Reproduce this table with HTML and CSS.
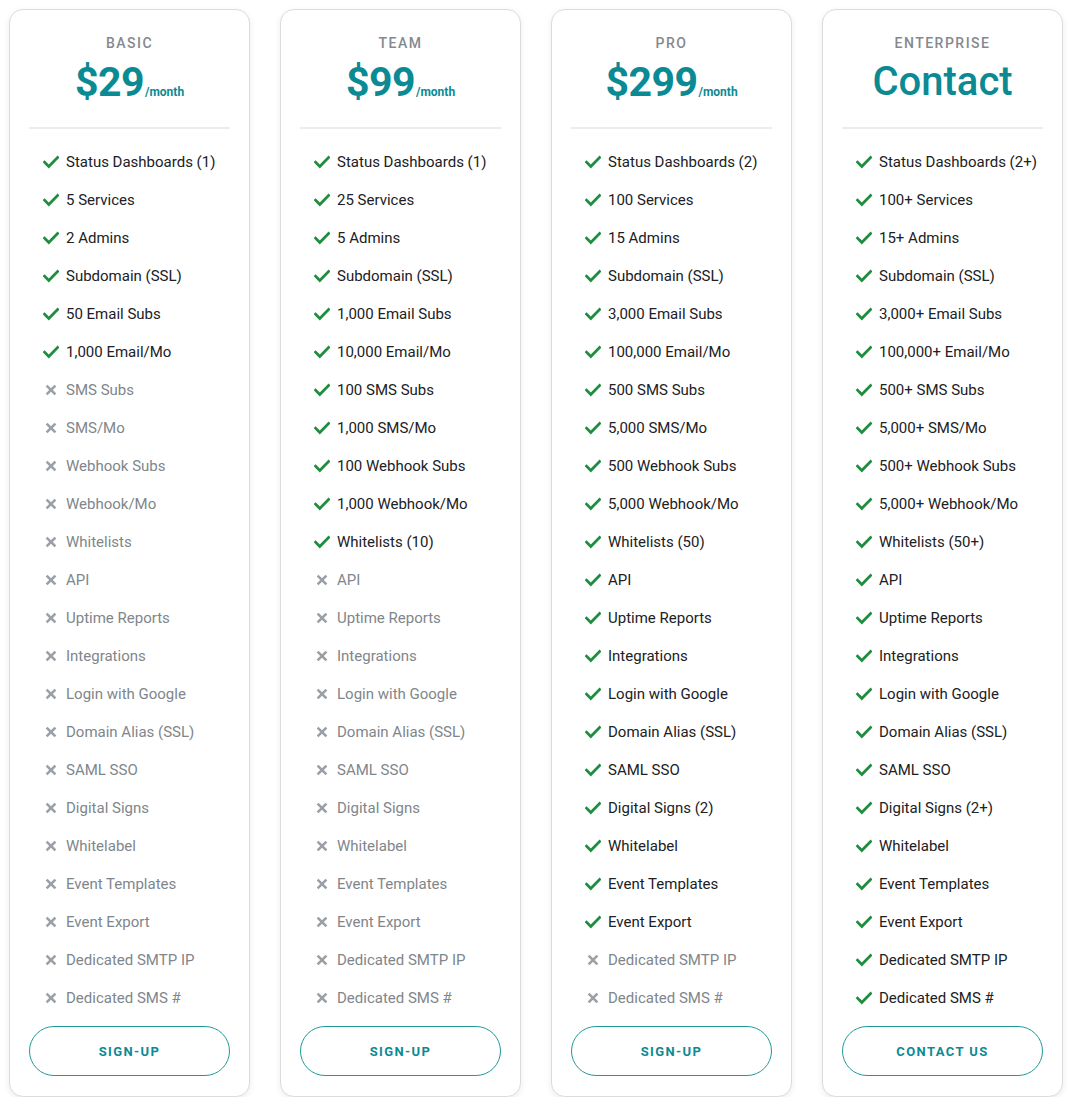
FILE: index.html
```html
<!DOCTYPE html>
<html lang="en">
<head>
<meta charset="utf-8">
<title>Pricing</title>
<link rel="stylesheet" href="styles.css">
</head>
<body>
<svg class="defs" width="0" height="0" aria-hidden="true">
  <symbol id="chk" viewBox="0 0 16 16"><path d="M1.6 8.2l4.2 4.2L14.6 3.5" fill="none" stroke="#1e8e3e" stroke-width="2.8" stroke-linecap="square"/></symbol>
  <symbol id="x" viewBox="0 0 16 16"><path d="M3.6 3.6l8.8 8.8M12.4 3.6l-8.8 8.8" fill="none" stroke="#9aa0a6" stroke-width="2.6"/></symbol>
</svg>
<div class="plans">
  <section class="card">
    <header class="head">
      <div class="tier">BASIC</div>
      <div class="price"><span class="amt">$29</span><span class="per">/month</span></div>
    </header>
    <ul class="feats">
      <li class="on"><svg class="ic"><use href="#chk"/></svg>Status Dashboards (1)</li>
      <li class="on"><svg class="ic"><use href="#chk"/></svg>5 Services</li>
      <li class="on"><svg class="ic"><use href="#chk"/></svg>2 Admins</li>
      <li class="on"><svg class="ic"><use href="#chk"/></svg>Subdomain (SSL)</li>
      <li class="on"><svg class="ic"><use href="#chk"/></svg>50 Email Subs</li>
      <li class="on"><svg class="ic"><use href="#chk"/></svg>1,000 Email/Mo</li>
      <li class="off"><svg class="ic"><use href="#x"/></svg>SMS Subs</li>
      <li class="off"><svg class="ic"><use href="#x"/></svg>SMS/Mo</li>
      <li class="off"><svg class="ic"><use href="#x"/></svg>Webhook Subs</li>
      <li class="off"><svg class="ic"><use href="#x"/></svg>Webhook/Mo</li>
      <li class="off"><svg class="ic"><use href="#x"/></svg>Whitelists</li>
      <li class="off"><svg class="ic"><use href="#x"/></svg>API</li>
      <li class="off"><svg class="ic"><use href="#x"/></svg>Uptime Reports</li>
      <li class="off"><svg class="ic"><use href="#x"/></svg>Integrations</li>
      <li class="off"><svg class="ic"><use href="#x"/></svg>Login with Google</li>
      <li class="off"><svg class="ic"><use href="#x"/></svg>Domain Alias (SSL)</li>
      <li class="off"><svg class="ic"><use href="#x"/></svg>SAML SSO</li>
      <li class="off"><svg class="ic"><use href="#x"/></svg>Digital Signs</li>
      <li class="off"><svg class="ic"><use href="#x"/></svg>Whitelabel</li>
      <li class="off"><svg class="ic"><use href="#x"/></svg>Event Templates</li>
      <li class="off"><svg class="ic"><use href="#x"/></svg>Event Export</li>
      <li class="off"><svg class="ic"><use href="#x"/></svg>Dedicated SMTP IP</li>
      <li class="off"><svg class="ic"><use href="#x"/></svg>Dedicated SMS #</li>
    </ul>
    <a class="btn" href="#">SIGN-UP</a>
  </section>

  <section class="card">
    <header class="head">
      <div class="tier">TEAM</div>
      <div class="price"><span class="amt">$99</span><span class="per">/month</span></div>
    </header>
    <ul class="feats">
      <li class="on"><svg class="ic"><use href="#chk"/></svg>Status Dashboards (1)</li>
      <li class="on"><svg class="ic"><use href="#chk"/></svg>25 Services</li>
      <li class="on"><svg class="ic"><use href="#chk"/></svg>5 Admins</li>
      <li class="on"><svg class="ic"><use href="#chk"/></svg>Subdomain (SSL)</li>
      <li class="on"><svg class="ic"><use href="#chk"/></svg>1,000 Email Subs</li>
      <li class="on"><svg class="ic"><use href="#chk"/></svg>10,000 Email/Mo</li>
      <li class="on"><svg class="ic"><use href="#chk"/></svg>100 SMS Subs</li>
      <li class="on"><svg class="ic"><use href="#chk"/></svg>1,000 SMS/Mo</li>
      <li class="on"><svg class="ic"><use href="#chk"/></svg>100 Webhook Subs</li>
      <li class="on"><svg class="ic"><use href="#chk"/></svg>1,000 Webhook/Mo</li>
      <li class="on"><svg class="ic"><use href="#chk"/></svg>Whitelists (10)</li>
      <li class="off"><svg class="ic"><use href="#x"/></svg>API</li>
      <li class="off"><svg class="ic"><use href="#x"/></svg>Uptime Reports</li>
      <li class="off"><svg class="ic"><use href="#x"/></svg>Integrations</li>
      <li class="off"><svg class="ic"><use href="#x"/></svg>Login with Google</li>
      <li class="off"><svg class="ic"><use href="#x"/></svg>Domain Alias (SSL)</li>
      <li class="off"><svg class="ic"><use href="#x"/></svg>SAML SSO</li>
      <li class="off"><svg class="ic"><use href="#x"/></svg>Digital Signs</li>
      <li class="off"><svg class="ic"><use href="#x"/></svg>Whitelabel</li>
      <li class="off"><svg class="ic"><use href="#x"/></svg>Event Templates</li>
      <li class="off"><svg class="ic"><use href="#x"/></svg>Event Export</li>
      <li class="off"><svg class="ic"><use href="#x"/></svg>Dedicated SMTP IP</li>
      <li class="off"><svg class="ic"><use href="#x"/></svg>Dedicated SMS #</li>
    </ul>
    <a class="btn" href="#">SIGN-UP</a>
  </section>

  <section class="card">
    <header class="head">
      <div class="tier">PRO</div>
      <div class="price"><span class="amt">$299</span><span class="per">/month</span></div>
    </header>
    <ul class="feats">
      <li class="on"><svg class="ic"><use href="#chk"/></svg>Status Dashboards (2)</li>
      <li class="on"><svg class="ic"><use href="#chk"/></svg>100 Services</li>
      <li class="on"><svg class="ic"><use href="#chk"/></svg>15 Admins</li>
      <li class="on"><svg class="ic"><use href="#chk"/></svg>Subdomain (SSL)</li>
      <li class="on"><svg class="ic"><use href="#chk"/></svg>3,000 Email Subs</li>
      <li class="on"><svg class="ic"><use href="#chk"/></svg>100,000 Email/Mo</li>
      <li class="on"><svg class="ic"><use href="#chk"/></svg>500 SMS Subs</li>
      <li class="on"><svg class="ic"><use href="#chk"/></svg>5,000 SMS/Mo</li>
      <li class="on"><svg class="ic"><use href="#chk"/></svg>500 Webhook Subs</li>
      <li class="on"><svg class="ic"><use href="#chk"/></svg>5,000 Webhook/Mo</li>
      <li class="on"><svg class="ic"><use href="#chk"/></svg>Whitelists (50)</li>
      <li class="on"><svg class="ic"><use href="#chk"/></svg>API</li>
      <li class="on"><svg class="ic"><use href="#chk"/></svg>Uptime Reports</li>
      <li class="on"><svg class="ic"><use href="#chk"/></svg>Integrations</li>
      <li class="on"><svg class="ic"><use href="#chk"/></svg>Login with Google</li>
      <li class="on"><svg class="ic"><use href="#chk"/></svg>Domain Alias (SSL)</li>
      <li class="on"><svg class="ic"><use href="#chk"/></svg>SAML SSO</li>
      <li class="on"><svg class="ic"><use href="#chk"/></svg>Digital Signs (2)</li>
      <li class="on"><svg class="ic"><use href="#chk"/></svg>Whitelabel</li>
      <li class="on"><svg class="ic"><use href="#chk"/></svg>Event Templates</li>
      <li class="on"><svg class="ic"><use href="#chk"/></svg>Event Export</li>
      <li class="off"><svg class="ic"><use href="#x"/></svg>Dedicated SMTP IP</li>
      <li class="off"><svg class="ic"><use href="#x"/></svg>Dedicated SMS #</li>
    </ul>
    <a class="btn" href="#">SIGN-UP</a>
  </section>

  <section class="card">
    <header class="head">
      <div class="tier">ENTERPRISE</div>
      <div class="price"><span class="amt contact">Contact</span></div>
    </header>
    <ul class="feats">
      <li class="on"><svg class="ic"><use href="#chk"/></svg>Status Dashboards (2+)</li>
      <li class="on"><svg class="ic"><use href="#chk"/></svg>100+ Services</li>
      <li class="on"><svg class="ic"><use href="#chk"/></svg>15+ Admins</li>
      <li class="on"><svg class="ic"><use href="#chk"/></svg>Subdomain (SSL)</li>
      <li class="on"><svg class="ic"><use href="#chk"/></svg>3,000+ Email Subs</li>
      <li class="on"><svg class="ic"><use href="#chk"/></svg>100,000+ Email/Mo</li>
      <li class="on"><svg class="ic"><use href="#chk"/></svg>500+ SMS Subs</li>
      <li class="on"><svg class="ic"><use href="#chk"/></svg>5,000+ SMS/Mo</li>
      <li class="on"><svg class="ic"><use href="#chk"/></svg>500+ Webhook Subs</li>
      <li class="on"><svg class="ic"><use href="#chk"/></svg>5,000+ Webhook/Mo</li>
      <li class="on"><svg class="ic"><use href="#chk"/></svg>Whitelists (50+)</li>
      <li class="on"><svg class="ic"><use href="#chk"/></svg>API</li>
      <li class="on"><svg class="ic"><use href="#chk"/></svg>Uptime Reports</li>
      <li class="on"><svg class="ic"><use href="#chk"/></svg>Integrations</li>
      <li class="on"><svg class="ic"><use href="#chk"/></svg>Login with Google</li>
      <li class="on"><svg class="ic"><use href="#chk"/></svg>Domain Alias (SSL)</li>
      <li class="on"><svg class="ic"><use href="#chk"/></svg>SAML SSO</li>
      <li class="on"><svg class="ic"><use href="#chk"/></svg>Digital Signs (2+)</li>
      <li class="on"><svg class="ic"><use href="#chk"/></svg>Whitelabel</li>
      <li class="on"><svg class="ic"><use href="#chk"/></svg>Event Templates</li>
      <li class="on"><svg class="ic"><use href="#chk"/></svg>Event Export</li>
      <li class="on"><svg class="ic"><use href="#chk"/></svg>Dedicated SMTP IP</li>
      <li class="on"><svg class="ic"><use href="#chk"/></svg>Dedicated SMS #</li>
    </ul>
    <a class="btn" href="#">CONTACT US</a>
  </section>
</div>
</body>
</html>
```

FILE: styles.css
```css
* { box-sizing: border-box; }

html, body {
  margin: 0;
  padding: 0;
  background: #ffffff;
}

body {
  font-family: Roboto, "Noto Sans", Arial, sans-serif;
  color: #202124;
}

.defs {
  position: absolute;
  width: 0;
  height: 0;
  overflow: hidden;
}

.plans {
  display: flex;
  gap: 30px;
  padding: 9px 7px 0 9px;
}

.card {
  flex: 0 0 241px;
  height: 1088px;
  display: flex;
  flex-direction: column;
  padding: 23px 19px 20px;
  border: 1px solid #dcdcdc;
  border-radius: 14px;
  background: #fff;
  box-shadow: 0 2px 6px rgba(0, 0, 0, 0.08);
}

.head {
  flex: 0 0 auto;
  text-align: center;
  padding-bottom: 20px;
  border-bottom: 2px solid #ececec;
}

.tier {
  font-size: 14px;
  line-height: 20px;
  font-weight: 500;
  letter-spacing: 1.5px;
  color: #85898e;
}

.price {
  margin-top: 4px;
  height: 50px;
  line-height: 50px;
  color: #0b8a94;
  white-space: nowrap;
}

.amt {
  font-size: 41px;
  font-weight: 700;
  letter-spacing: -0.5px;
}

.amt.contact {
  font-size: 40px;
  font-weight: 500;
  letter-spacing: 0;
}

.per {
  font-size: 12px;
  font-weight: 700;
  margin-left: 1px;
}

.feats {
  flex: 0 0 auto;
  list-style: none;
  margin: 14px 0 0;
  padding: 0;
}

.feats li {
  display: flex;
  align-items: center;
  height: 38px;
  padding-left: 14px;
  font-size: 15px;
  white-space: nowrap;
}

.feats li.on { color: #202124; }
.feats li.off { color: #80868b; }

.ic {
  width: 16px;
  height: 16px;
  flex: 0 0 16px;
  margin-right: 7px;
}

.btn {
  flex: 0 0 50px;
  display: flex;
  align-items: center;
  justify-content: center;
  height: 50px;
  margin-top: 9px;
  border: 1px solid #1f9a98;
  border-radius: 25px;
  color: #0b8a94;
  font-size: 13px;
  font-weight: 700;
  letter-spacing: 1.4px;
  text-decoration: none;
}
```
